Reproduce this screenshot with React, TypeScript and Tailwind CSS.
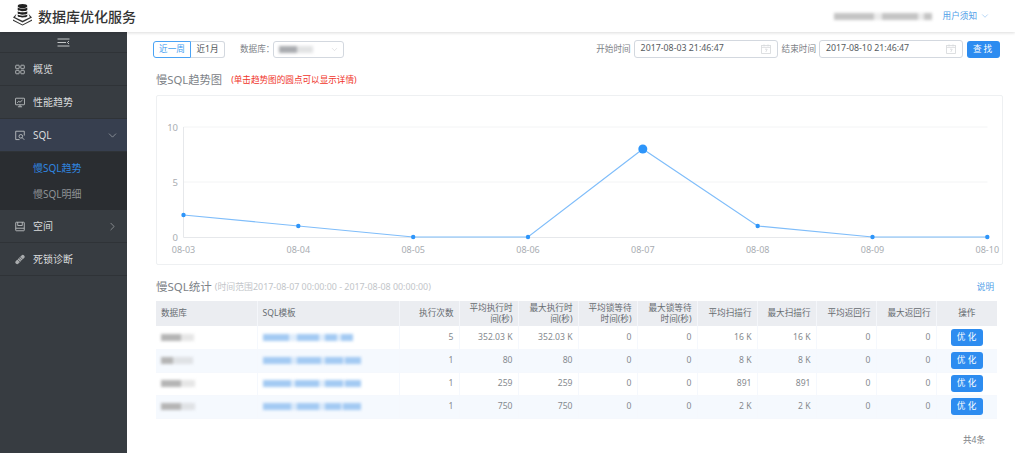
import { ChevronDown, ChevronRight } from 'lucide-react';

const font = '[font-family:"Noto_Sans","Noto_Sans_CJK_SC",sans-serif]';

interface IRow {
  db: number[];
  sql: number[];
  count: string;
  avgTime: string;
  maxTime: string;
  avgScan: string;
  maxScan: string;
}

const rows: IRow[] = [
  { db: [20, 13], sql: [26, 8, 22, 6, 12, 4, 12], count: '5', avgTime: '352.03 K', maxTime: '352.03 K', avgScan: '16 K', maxScan: '16 K' },
  { db: [12, 20], sql: [28, 6, 24, 4, 18, 2, 16], count: '1', avgTime: '80', maxTime: '80', avgScan: '8 K', maxScan: '8 K' },
  { db: [20, 14], sql: [28, 4, 24, 6, 18, 2, 16], count: '1', avgTime: '259', maxTime: '259', avgScan: '891', maxScan: '891' },
  { db: [20, 14], sql: [28, 6, 22, 6, 16, 2, 18], count: '1', avgTime: '750', maxTime: '750', avgScan: '2 K', maxScan: '2 K' },
];

// blurred-out text in the screenshot
const Blurred = ({ parts, color }: { parts: number[]; color: string }) => (
  <div className="flex h-[7px] blur-[1.5px]">
    {parts.map((w, i) => (
      <div
        key={i}
        className="h-full"
        style={{ width: w, backgroundColor: i % 2 === 0 ? color : `${color}55` }}
      />
    ))}
  </div>
);

const Logo = () => (
  <svg width="24" height="24" viewBox="0 0 24 24" className="shrink-0">
    <ellipse cx="11.5" cy="2" rx="4.8" ry="2" fill="#222" />
    <path d="M6.7 3.4c1 1.5 8.6 1.5 9.6 0v2.6c-1 1.6-8.6 1.6-9.6 0z" fill="#222" />
    <path d="M6.7 7.2c1 1.5 8.6 1.5 9.6 0v2.4c-1 1.6-8.6 1.6-9.6 0z" fill="#222" />
    <path d="M6.7 10.6c1 1.5 8.6 1.5 9.6 0v1.6c-1 1.6-8.6 1.6-9.6 0z" fill="#222" />
    <path d="M5.5 9.8 2 13.5 11.5 18.5 21 13.5 17.5 9.8l1.4 3.4-7.4 3.6-7.4-3.6z" fill="#333" />
    <path d="M2 15.5 11.5 20.5 21 15.5v1.2L11.5 21.6 2 16.7z" fill="#333" />
  </svg>
);

const GridIcon = () => (
  <svg width="11" height="11" viewBox="0 0 11 11" fill="none" stroke="#c8cbcd" strokeWidth="0.9">
    <rect x="0.8" y="0.8" width="3.8" height="3.8" rx="0.6" />
    <rect x="6.4" y="0.8" width="3.8" height="3.8" rx="0.6" />
    <rect x="0.8" y="6.4" width="3.8" height="3.8" rx="0.6" />
    <rect x="6.4" y="6.4" width="3.8" height="3.8" rx="0.6" />
  </svg>
);

const TrendIcon = () => (
  <svg width="11" height="11" viewBox="0 0 11 11" fill="none" stroke="#c8cbcd" strokeWidth="0.9">
    <rect x="0.5" y="0.8" width="10" height="7.2" rx="0.6" />
    <path d="M2.4 5.8 4.2 4.2l1.3 1 2.8-2.4M3.2 10.2h4.6M5.5 8v2" />
  </svg>
);

const SqlIcon = () => (
  <svg width="11" height="11" viewBox="0 0 11 11" fill="none" stroke="#c8cbcd" strokeWidth="0.9">
    <path d="M5 10H0.8V0.8h9.4v4.8" />
    <circle cx="6.4" cy="6.4" r="2" />
    <path d="m7.8 7.8 2.4 2.4" />
  </svg>
);

const DiskIcon = () => (
  <svg width="11" height="11" viewBox="0 0 11 11" fill="none" stroke="#c8cbcd" strokeWidth="0.9">
    <rect x="0.8" y="0.8" width="9.4" height="9.4" rx="0.6" />
    <path d="M3 0.8v3.6h5V0.8M0.8 7.4h9.4" />
  </svg>
);

const PillIcon = () => (
  <svg width="11" height="11" viewBox="0 0 11 11" fill="none">
    <path d="M2.4 8.6 8.6 2.4" stroke="#a9acae" strokeWidth="4" strokeLinecap="round" />
    <path d="M2.2 4.9 6.1 8.8M3.6 3.4l3.9 3.9M5 2l3.9 3.9" stroke="#373c41" strokeWidth="0.7" />
  </svg>
);

const CalendarIcon = () => (
  <svg width="10" height="10" viewBox="0 0 10 10" fill="none" stroke="#d5d8da" strokeWidth="0.8">
    <rect x="0.6" y="1.4" width="8.8" height="8" />
    <path d="M0.6 3.4h8.8M3 0.4v2M7 0.4v2M4 5.2h2.2L4.8 8" />
  </svg>
);

const MenuItem = ({
  icon,
  label,
  active,
  arrow,
}: {
  icon: React.ReactNode;
  label: string;
  active?: boolean;
  arrow?: 'down' | 'right';
}) => (
  <div
    className={`flex h-[33px] items-center border-b border-[#2f3337] pl-[15px] pr-[8px] text-[10px] text-[#d9dbdc] ${
      active ? 'bg-[#373f4f]' : ''
    }`}
  >
    <span className="mr-[8px] flex w-[10px] justify-center">{icon}</span>
    <span className="flex-1">{label}</span>
    {arrow === 'down' && <ChevronDown size={13} strokeWidth={1} color="#c8cbcd" />}
    {arrow === 'right' && <ChevronRight size={13} strokeWidth={1} color="#c8cbcd" />}
  </div>
);

const Sidebar = () => (
  <aside className="flex w-[127px] shrink-0 flex-col bg-[#373c41]">
    <div className="flex h-[21px] items-center justify-center border-b border-[#2f3337]">
      <svg width="13" height="9" viewBox="0 0 13 9" fill="none" stroke="#d5d7d8" strokeWidth="0.9">
        <path d="M0.5 1h12M0.5 4.5h8.5M0.5 8h12M12 3l-1.6 1.5L12 6" />
      </svg>
    </div>
    <MenuItem icon={<GridIcon />} label="概览" />
    <MenuItem icon={<TrendIcon />} label="性能趋势" />
    <MenuItem icon={<SqlIcon />} label="SQL" active arrow="down" />
    <div className="flex h-[58px] flex-col justify-center gap-[8px] bg-[#2a2d31] pl-[33px] text-[10px]">
      <div className="leading-[18px] text-[#2f86e0]">慢SQL趋势</div>
      <div className="leading-[18px] text-[#8f9396]">慢SQL明细</div>
    </div>
    <MenuItem icon={<DiskIcon />} label="空间" arrow="right" />
    <MenuItem icon={<PillIcon />} label="死锁诊断" />
  </aside>
);

const DateInput = ({ value }: { value: string }) => (
  <div className="flex h-[18px] w-[144px] items-center justify-between rounded-[3px] border border-[#d3d8df] pl-[6px] pr-[6px] text-[8.8px] text-[#555b60]">
    <span>{value}</span>
    <CalendarIcon />
  </div>
);

const Toolbar = () => (
  <div className="flex h-[18px] items-center text-[8.6px]">
    <div className="ml-[-3px] flex h-[17px]">
      <div className="flex w-[38px] items-center justify-center rounded-l-[3px] border border-[#4aa3f5] text-[#3d9cf0]">
        近一周
      </div>
      <div className="flex w-[34px] items-center justify-center rounded-r-[3px] border border-l-0 border-[#d3d8df] text-[#4d5358]">
        近1月
      </div>
    </div>
    <span className="ml-[15px] text-[#7d8287]">数据库：</span>
    <div className="ml-[-1px] flex h-[17px] w-[71px] items-center justify-between rounded-[3px] border border-[#d3d8df] pl-[5px] pr-[4px]">
      <Blurred parts={[18, 16]} color="#a9abaf" />
      <ChevronDown size={9} strokeWidth={1} color="#b9bdc2" />
    </div>
    <span className="ml-auto mr-[3px] text-[#7d8287]">开始时间</span>
    <DateInput value="2017-08-03 21:46:47" />
    <span className="ml-[4px] mr-[3px] text-[#7d8287]">结束时间</span>
    <DateInput value="2017-08-10 21:46:47" />
    <button className="ml-[4px] h-[17px] w-[33px] rounded-[3px] bg-[#2d8cf0] text-[8.6px] tracking-[2px] text-white">
      查找
    </button>
  </div>
);

const TrendChart = () => {
  const xs = [26.5, 141.3, 256.2, 371, 485.8, 600.7, 715.5, 830.3];
  const values = [2, 1, 0, 0, 8, 1, 0, 0];
  const labels = ['08-03', '08-04', '08-05', '08-06', '08-07', '08-08', '08-09', '08-10'];
  const yOf = (v: number) => 141 - v * 11;
  const points = xs.map((x, i) => `${x},${yOf(values[i])}`).join(' ');

  return (
    <div className="h-[170px] rounded-[2px] border border-[#eef0f2] bg-white">
      <svg width="846" height="168" viewBox="0 0 846 168" className="block">
        <path d="M26.5 31H830.5M26.5 86H830.5" stroke="#f3f4f5" strokeWidth="1" />
        <path d="M26.5 31V141.5H830.5" fill="none" stroke="#e6e8eb" strokeWidth="1" />
        {[
          { t: '10', y: 31 },
          { t: '5', y: 86 },
          { t: '0', y: 141 },
        ].map((a) => (
          <text key={a.t} x="21" y={a.y + 3.5} textAnchor="end" fontSize="9.5" fill="#a9adb2">
            {a.t}
          </text>
        ))}
        {xs.map((x, i) => (
          <text key={labels[i]} x={x} y="156.5" textAnchor="middle" fontSize="9" fill="#a9adb2">
            {labels[i]}
          </text>
        ))}
        <polyline points={points} fill="none" stroke="#7fbdfa" strokeWidth="1.2" />
        {xs.map((x, i) => (
          <circle key={x} cx={x} cy={yOf(values[i])} r={i === 4 ? 4.5 : 2.2} fill="#2d95fa" />
        ))}
      </svg>
    </div>
  );
};

const headers = [
  ['执行次数'],
  ['平均执行时', '间(秒)'],
  ['最大执行时', '间(秒)'],
  ['平均锁等待', '时间(秒)'],
  ['最大锁等待', '时间(秒)'],
  ['平均扫描行'],
  ['最大扫描行'],
  ['平均返回行'],
  ['最大返回行'],
];

const StatsTable = () => (
  <table className="w-[841px] table-fixed border-collapse text-[8.6px] text-[#85898e]">
    <colgroup>
      <col className="w-[101px]" />
      <col className="w-[142px]" />
      <col className="w-[60px]" />
      <col className="w-[59px]" />
      <col className="w-[60px]" />
      <col className="w-[59px]" />
      <col className="w-[60px]" />
      <col className="w-[60px]" />
      <col className="w-[59px]" />
      <col className="w-[60px]" />
      <col className="w-[60px]" />
      <col className="w-[61px]" />
    </colgroup>
    <thead>
      <tr className="h-[25px] bg-[#ebedf1] leading-[11px] text-[#666b70]">
        <th className="border-r border-[#f4f6fa] pl-[5px] text-left font-normal">数据库</th>
        <th className="border-r border-[#f4f6fa] pl-[5px] text-left font-normal">SQL模板</th>
        {headers.map((h) => (
          <th key={h[0]} className="border-r border-[#f4f6fa] pr-[5px] text-right font-normal">
            {h.map((line) => (
              <div key={line}>{line}</div>
            ))}
          </th>
        ))}
        <th className="text-center font-normal">操作</th>
      </tr>
    </thead>
    <tbody>
      {rows.map((r, i) => (
        <tr key={i} className={`h-[23px] ${i % 2 === 1 ? 'bg-[#f5f9fe]' : 'bg-white'}`}>
          <td className="border-r border-b border-[#f5f8fd] pl-[5px]">
            <Blurred parts={r.db} color="#b5b5b5" />
          </td>
          <td className="border-r border-b border-[#f5f8fd] pl-[5px]">
            <Blurred parts={r.sql} color="#a3caf3" />
          </td>
          {[r.count, r.avgTime, r.maxTime, '0', '0', r.avgScan, r.maxScan, '0', '0'].map((v, j) => (
            <td key={j} className="border-r border-b border-[#f5f8fd] pr-[5px] text-right">
              {v}
            </td>
          ))}
          <td className="border-b border-[#f5f8fd] text-center">
            <button className="h-[17px] w-[32px] rounded-[3px] bg-[#2d8cf0] pl-[2px] text-[8.6px] tracking-[2.5px] text-white">
              优化
            </button>
          </td>
        </tr>
      ))}
    </tbody>
  </table>
);

export default function App() {
  return (
    <div className={`flex h-[453px] w-[1015px] flex-col overflow-hidden bg-white ${font}`}>
      <header className="z-10 flex h-[32px] shrink-0 items-center bg-white pl-[11px] pr-[25px] shadow-[0_1px_3px_rgba(0,0,0,0.14)]">
        <Logo />
        <h1 className="ml-[3px] text-[14px] font-medium text-[#333]">数据库优化服务</h1>
        <div className="ml-auto">
          <Blurred parts={[40, 8, 36, 6, 8]} color="#c4c4c4" />
        </div>
        <span className="ml-[11px] text-[8.6px] text-[#4f9ee8]">用户须知</span>
        <ChevronDown size={10} strokeWidth={1} color="#4f9ee8" className="ml-[3px]" />
      </header>
      <div className="flex min-h-0 flex-1">
        <Sidebar />
        <main className="min-w-0 flex-1 pl-[29px] pr-[12px] pt-[8px]">
          <div className="pr-[3px]">
            <Toolbar />
          </div>
          <div className="mt-[12px] flex h-[20px] items-center">
            <span className="text-[11.3px] text-[#7d8287]">慢SQL趋势图</span>
            <span className="ml-[9px] text-[8.6px] text-[#f0352b]">(单击趋势图的圆点可以显示详情)</span>
          </div>
          <div className="mt-[5px]">
            <TrendChart />
          </div>
          <div className="mt-[12px] flex h-[20px] items-center">
            <span className="text-[11.5px] text-[#7d8287]">慢SQL统计</span>
            <span className="ml-[3px] text-[8.9px] text-[#c2c5c9]">
              (时间范围2017-08-07 00:00:00 - 2017-08-08 00:00:00)
            </span>
            <span className="ml-auto mr-[9px] text-[8.6px] text-[#4f9ee8]">说明</span>
          </div>
          <div className="mt-[4px]">
            <StatsTable />
          </div>
          <div className="mt-[15px] pr-[18px] text-right text-[8.6px] text-[#7d8287]">共4条</div>
        </main>
      </div>
    </div>
  );
}
